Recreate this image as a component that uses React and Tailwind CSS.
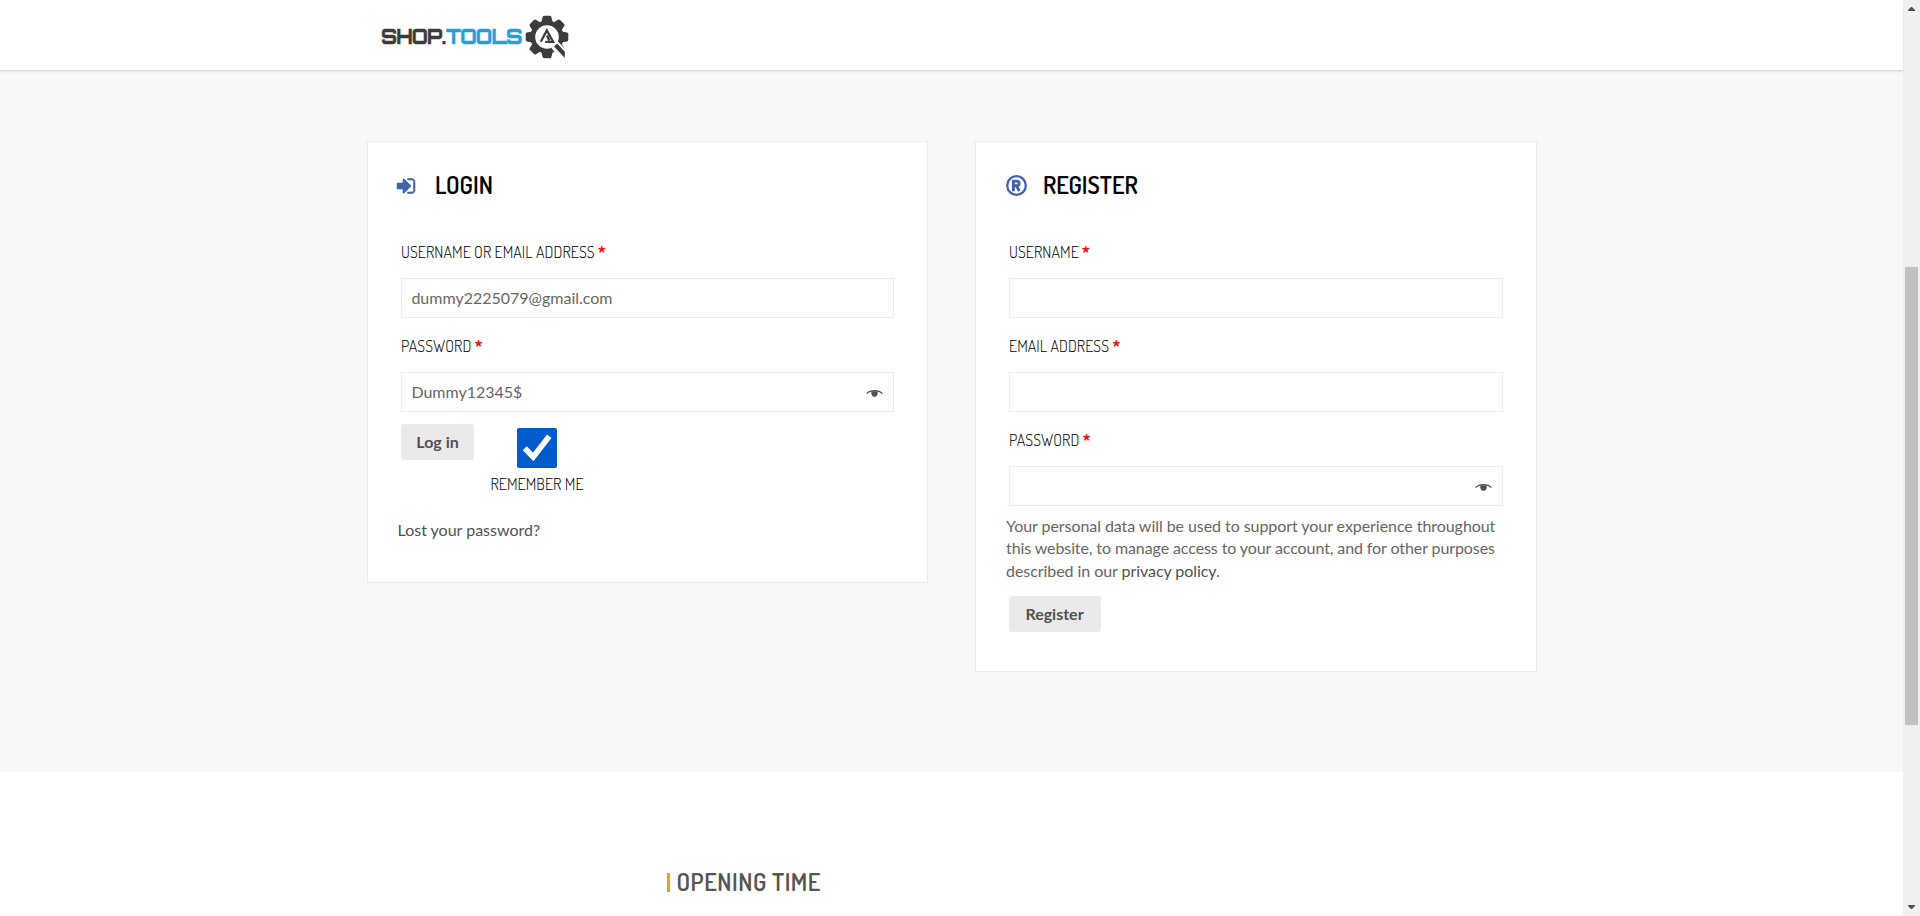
import React from "react";

const DOSIS = "font-['Dosis','Roboto',sans-serif]";

function Gear() {
  return (
    <svg className="block h-[44px] w-[44px]" viewBox="-22 -22 44 44" aria-hidden="true">
      <g fill="#3c3c3b">
        <circle r="16.6" />
        {[0, 45, 90, 135, 180, 225, 270, 315].map((a) => (
          <path key={a} transform={`rotate(${a})`} d="M-5.6 -15 L-4.4 -20 Q-4 -21.3 -2.8 -21.3 H2.8 Q4 -21.3 4.4 -20 L5.6 -15 Z" />
        ))}
      </g>
      <circle r="11.8" fill="#fff" />
      <path d="M4 10.5 L10.5 4 L22 16 V22 H13 Z" fill="#fff" />
      <path d="M7 9.6 L10.2 6.6 L17.8 14.8 V21 Z" fill="#3c3c3b" />
      <path d="M-6.2 4.8 L-0.2 -6.6 L6.2 4.8 H-1.8 M0 -1.6 L2.4 3.4" fill="none" stroke="#3c3c3b" strokeWidth="2.2" />
    </svg>
  );
}

function SignIn() {
  return (
    <svg className="mt-px h-[18px] w-[18px] overflow-visible" viewBox="128 128 1536 1536" fill="currentColor" stroke="currentColor" strokeWidth="50" aria-hidden="true">
      <path d="M1312 896q0 26-19 45l-544 544q-19 19-45 19t-45-19-19-45v-288h-448q-26 0-45-19t-19-45v-384q0-26 19-45t45-19h448v-288q0-26 19-45t45-19 45 19l544 544q19 19 19 45zm352-352v704q0 119-84.5 203.5t-203.5 84.5h-320q-13 0-22.5-9.5t-9.5-22.5q0-4-1-20t-.5-26.5 3-23.5 10-19.5 20.5-6.5h320q66 0 113-47t47-113v-704q0-66-47-113t-113-47h-312l-11.5-1-11.5-3-8-5.5-7-9-2-13.5q0-4-1-20t-.5-26.5 3-23.5 10-19.5 20.5-6.5h320q119 0 203.5 84.5t84.5 203.5z" />
    </svg>
  );
}

function Registered() {
  return (
    <svg className="ml-[0.5px] mt-[1.5px] h-[21px] w-[21px]" viewBox="0 0 21 21" fill="none" stroke="currentColor" aria-hidden="true">
      <circle cx="10.5" cy="10.5" r="9.3" strokeWidth="2.3" />
      <path d="M7.4 16.2 V4.8 M7.4 6.1 H10.6 C14 6.1 14 10.8 10.6 10.8 H7.4 M10.6 10.8 L13.3 16.2" strokeWidth="2.9" />
    </svg>
  );
}

function Eye() {
  return (
    <svg className="mt-0.5 h-[9px] w-[17px]" viewBox="0 0 17 9" aria-hidden="true">
      <path d="M0.6 4.6 C4.5 0.6 12.5 0.6 16.4 4.6" fill="none" stroke="#515151" strokeWidth="1.3" />
      <path d="M5.2 2.2 H11.8 C12 6 10.8 7.8 8.5 7.8 C6.2 7.8 5 6 5.2 2.2Z" fill="#515151" />
    </svg>
  );
}

function Label({ children, required = true }) {
  return (
    <label className={`${DOSIS} block h-6 whitespace-nowrap text-base font-light leading-6 tracking-[0.08px] text-black`}>
      {children}
      {required && <span className="font-bold text-[#f00]"> *</span>}
    </label>
  );
}

function Field({ label, value, eye }) {
  return (
    <div className="mb-[30px] h-16">
      <Label>{label}</Label>
      <div className="mt-[14px] flex h-10 items-center justify-between border border-[#ebebeb] bg-white pl-[9.4px] pr-[10px] text-base text-[#666]">
        <span>{value}</span>
        {eye && <Eye />}
      </div>
    </div>
  );
}

function Title({ icon, children }) {
  return (
    <h2 className="flex h-8 items-center">
      <span className="flex w-[38px] items-center text-[#4162a8]">{icon}</span>
      <span className={`${DOSIS} text-[24px] font-semibold leading-8 text-black`}>{children}</span>
    </h2>
  );
}

function Scrollbar() {
  return (
    <div className="flex h-full w-[17px] shrink-0 flex-col items-center bg-[#f0f0f0]">
      <svg className="mt-[7px] h-1 w-[7px]" viewBox="0 0 7 4"><path d="M0 4 V3 L3 0 H4 L7 3 V4Z" fill="#505050" /></svg>
      <div className="mt-[256px] h-[458px] w-[13px] bg-[#c1c1c1]" />
      <svg className="mb-[7px] mt-auto h-1 w-[7px]" viewBox="0 0 7 4"><path d="M0 0 V1 L3 4 H4 L7 1 V0Z" fill="#505050" /></svg>
    </div>
  );
}

const button = "h-9 rounded-[3px] bg-[#ebe9eb] text-center text-base font-bold leading-9 text-[#515151]";

export default function App() {
  return (
    <div className="flex h-[916px] w-[1920px] overflow-hidden bg-white font-['Lato',sans-serif] text-base text-[#666]">
      <div className="flex min-w-0 flex-1 flex-col">
        <header className="z-10 flex h-[71px] shrink-0 items-center border-b border-[#dcdcdc] bg-white pl-[380px] shadow-[0_1px_2px_rgba(0,0,0,0.08)]">
          <div className="flex w-[145px] items-center whitespace-nowrap pt-[3px] font-['Orbitron','Audiowide','DejaVu_Sans',sans-serif] text-[20.5px] font-extrabold leading-none tracking-[-0.9px]">
            <span className="w-[66px] pl-px"><span className="inline-block origin-left scale-x-[0.945] text-[#3c3c3b] [-webkit-text-stroke:0.35px_#3c3c3b]">SHOP.</span></span>
            <span className="inline-block origin-left scale-x-[0.97] text-[#1fa2dc] [-webkit-text-stroke:0.35px_#1fa2dc]">TOOLS</span>
          </div>
          <div className="pt-[3px]"><Gear /></div>
        </header>
        <main className="flex h-[701px] shrink-0 items-start bg-[#f8f8f8] pl-[367px] pt-[70px]">
          <section className="h-[442px] w-[561px] border border-[#ebebeb] bg-white pl-[29px] pr-[33px] pt-[27px]">
            <Title icon={<SignIn />}>LOGIN</Title>
            <div className="ml-1 mt-[39px]">
              <Field label="USERNAME OR EMAIL ADDRESS" value="dummy2225079@gmail.com" />
              <Field label="PASSWORD" value="Dummy12345$" eye />
            </div>
            <div className="-mt-[4px] ml-1 flex items-start">
              <button className={`${button} w-[73px]`}>Log in</button>
              <div className="ml-[16px] mt-1 flex w-[94px] flex-col items-center">
                <span className="-ml-px flex size-10 items-center justify-center rounded-[2px] bg-[#005ccc]">
                  <svg className="size-10" viewBox="0 0 40 40"><path d="M7.8 20.2 L16.2 29 L32.3 8.2" fill="none" stroke="#fff" strokeWidth="5.6" /></svg>
                </span>
                <div className="mt-1"><Label required={false}>REMEMBER ME</Label></div>
              </div>
            </div>
            <p className="mt-[22px] pl-[0.5px] text-[#515151]">Lost your password?</p>
          </section>
          <section className="ml-[47px] h-[531px] w-[562px] border border-[#ebebeb] bg-white pl-[29px] pr-[33px] pt-[27px]">
            <Title icon={<Registered />}>REGISTER</Title>
            <div className="ml-1 mt-[39px]">
              <Field label="USERNAME" />
              <Field label="EMAIL ADDRESS" />
              <Field label="PASSWORD" eye />
            </div>
            <p className="-mt-[7.4px] ml-px whitespace-nowrap leading-[22.5px]">
              <span className="tracking-[-0.06px]">Your personal data will be used to support your experience throughout</span><br />
              <span className="tracking-[-0.096px]">this website, to manage access to your account, and for other purposes</span><br />
              <span className="tracking-[-0.06px]">described in our <span className="text-[#515151]">privacy policy</span>.</span>
            </p>
            <button className={`${button} ml-1 mt-[13.4px] w-[92px] pr-px`}>Register</button>
          </section>
        </main>
        <footer className="flex flex-1 items-start bg-white pl-[667px] pt-[94px]">
          <div className="flex h-8 items-center">
            <span className="mr-[6.5px] h-[19px] w-[3px] bg-[#d8a634]" />
            <h3 className={`${DOSIS} whitespace-nowrap text-[24px] font-semibold tracking-[0.5px] text-[#555]`}>OPENING TIME</h3>
          </div>
        </footer>
      </div>
      <Scrollbar />
    </div>
  );
}
